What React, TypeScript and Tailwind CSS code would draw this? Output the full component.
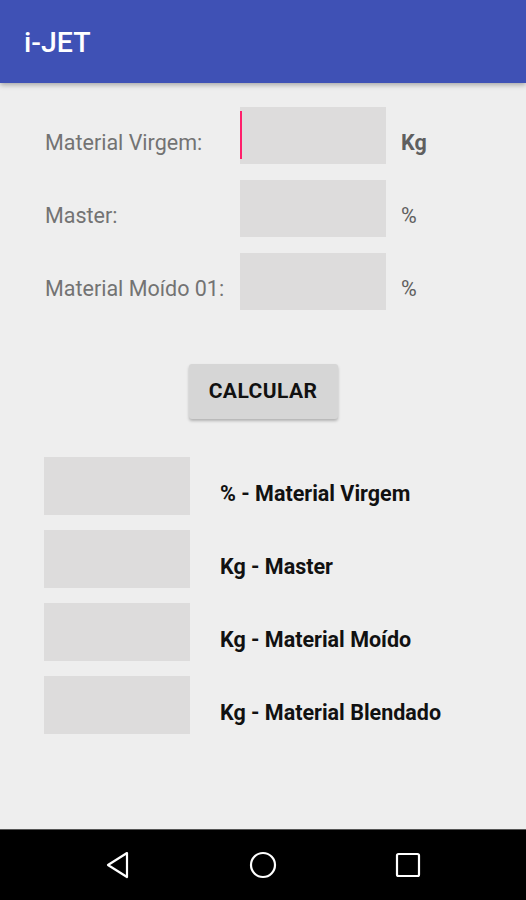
import React from "react";

const inputs = [
  { label: "Material Virgem:", unit: "Kg", bold: true, focused: true },
  { label: "Master:", unit: "%", bold: false, focused: false },
  { label: "Material Moído 01:", unit: "%", bold: false, focused: false },
];

const results = ["% - Material Virgem", "Kg - Master", "Kg - Material Moído", "Kg - Material Blendado"];

export default function App() {
  return (
    <div className="w-[526px] h-[900px] flex flex-col bg-[#eeeeee] overflow-hidden" style={{ fontFamily: "Roboto, 'Liberation Sans', sans-serif" }}>
      {/* Toolbar */}
      <header className="h-[83px] shrink-0 bg-[#3f51b5] flex items-center px-6 shadow-[0_2px_5px_rgba(0,0,0,0.3)] relative z-10">
        <h1 className="text-white text-[28.5px] font-medium pt-1">i-JET</h1>
      </header>

      <main className="flex-1 flex flex-col">
        {/* Entradas */}
        <div className="flex flex-col gap-4 pt-6 pl-[45px]">
          {inputs.map((r) => (
            <div key={r.label} className="flex items-center h-[57px]">
              <span className="w-[195px] text-[21.5px] text-[#737373] pt-4">{r.label}</span>
              <div className="w-[146px] h-[57px] bg-[#dddcdc] relative">
                {r.focused && <span className="absolute left-0 top-1 w-[2px] h-[48px] bg-[#ff1f6b]" />}
              </div>
              <span className={`ml-[15px] text-[21.5px] text-[#5f5f5f] pt-4 ${r.bold ? "font-bold" : ""}`}>{r.unit}</span>
            </div>
          ))}
        </div>

        <div className="flex justify-center mt-[54px]">
          <button className="w-[149px] h-[55px] bg-[#d6d6d6] rounded-[3px] shadow-[0_2px_3px_rgba(0,0,0,0.25)] text-[21px] tracking-[0.02em] font-bold text-[#111]">
            CALCULAR
          </button>
        </div>

        {/* Resultados */}
        <div className="flex flex-col gap-[15px] mt-[38px] pl-[44px]">
          {results.map((r) => (
            <div key={r} className="flex items-center h-[58px]">
              <div className="w-[146px] h-[58px] bg-[#dddcdc]" />
              <span className="ml-[30px] text-[21.5px] font-bold text-[#111] pt-4">{r}</span>
            </div>
          ))}
        </div>
      </main>

      {/* Barra de navegação */}
      <nav className="h-[71px] shrink-0 bg-black border-t border-[#555] flex items-center justify-center gap-[117px]">
        <svg width="28" height="30" viewBox="0 0 28 30" fill="none" stroke="white" strokeWidth="2.2" strokeLinejoin="round">
          <path d="M23 3 L4 15 L23 27 Z" />
        </svg>
        <svg width="28" height="28" viewBox="0 0 28 28" fill="none" stroke="white" strokeWidth="2.2">
          <circle cx="14" cy="14" r="12" />
        </svg>
        <svg width="28" height="28" viewBox="0 0 28 28" fill="none" stroke="white" strokeWidth="2.2">
          <rect x="3" y="3" width="22" height="22" rx="1.5" />
        </svg>
      </nav>
    </div>
  );
}
